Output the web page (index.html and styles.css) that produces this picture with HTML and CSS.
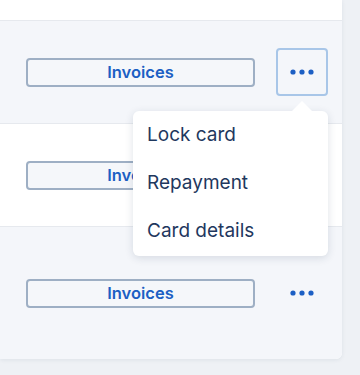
FILE: index.html
```html
<!DOCTYPE html>
<html>
<head>
<meta charset="utf-8">
<link rel="stylesheet" href="styles.css">
</head>
<body>
<div class="card">
  <div class="row row-top"></div>
  <div class="row row-alt">
    <div class="actions">
      <button class="invoices">Invoices</button>
      <div class="more-wrap">
        <button class="more active" aria-label="More">
          <svg width="24" height="6" viewBox="0 0 24 6"><circle cx="3" cy="3" r="2.6"/><circle cx="12" cy="3" r="2.6"/><circle cx="21" cy="3" r="2.6"/></svg>
        </button>
        <div class="menu">
          <div class="caret"></div>
          <div class="item">Lock card</div>
          <div class="item">Repayment</div>
          <div class="item">Card details</div>
        </div>
      </div>
    </div>
  </div>
  <div class="row">
    <div class="actions">
      <button class="invoices">Invoices</button>
      <div class="more-wrap">
        <button class="more" aria-label="More">
          <svg width="24" height="6" viewBox="0 0 24 6"><circle cx="3" cy="3" r="2.6"/><circle cx="12" cy="3" r="2.6"/><circle cx="21" cy="3" r="2.6"/></svg>
        </button>
      </div>
    </div>
  </div>
  <div class="row row-alt row-last">
    <div class="actions">
      <button class="invoices">Invoices</button>
      <div class="more-wrap">
        <button class="more" aria-label="More">
          <svg width="24" height="6" viewBox="0 0 24 6"><circle cx="3" cy="3" r="2.6"/><circle cx="12" cy="3" r="2.6"/><circle cx="21" cy="3" r="2.6"/></svg>
        </button>
      </div>
    </div>
  </div>
</div>
</body>
</html>
```
FILE: styles.css
```css
html, body {
  margin: 0;
  padding: 0;
}
body {
  background: #eef1f5;
  width: 360px;
  height: 375px;
  overflow: hidden;
  font-family: Inter, "Noto Sans", sans-serif;
}
.card {
  width: 342px;
  background: #ffffff;
  border-radius: 0 0 6px 0;
  box-shadow: 0 1px 4px rgba(30, 50, 80, 0.08);
}
.row {
  border-bottom: 1px solid #e6e9ee;
  display: flex;
  align-items: center;
  box-sizing: border-box;
  height: 103px;
}
.row-top {
  height: 21px;
}
.row-alt {
  background: #f4f6fa;
}
.row-last {
  height: 132px;
  border-bottom: none;
  border-radius: 0 0 6px 0;
}
.actions {
  display: flex;
  align-items: center;
  padding-left: 26px;
  gap: 21px;
}
.invoices {
  width: 229px;
  height: 29px;
  box-sizing: border-box;
  border: 2px solid #9eafc4;
  border-radius: 4px;
  background: #f5f7fa;
  color: #1c5fc4;
  font-family: Inter, "Noto Sans", sans-serif;
  font-weight: 600;
  font-size: 16.5px;
  padding: 0;
  cursor: pointer;
}
.more-wrap {
  position: relative;
}
.more {
  width: 52px;
  height: 48px;
  box-sizing: border-box;
  border: 2px solid transparent;
  border-radius: 4px;
  background: transparent;
  display: flex;
  align-items: center;
  justify-content: center;
  padding: 0;
  fill: #1c5fc4;
}
.more.active {
  border-color: #a8c6e8;
}
.menu {
  position: absolute;
  right: 0;
  top: 63px;
  width: 195px;
  background: #ffffff;
  border-radius: 6px;
  box-shadow: 0 2px 8px rgba(30, 50, 80, 0.14);
  padding: 0 0 1px;
  z-index: 5;
}
.caret {
  position: absolute;
  top: -10px;
  right: 16px;
  width: 0;
  height: 0;
  border-left: 10px solid transparent;
  border-right: 10px solid transparent;
  border-bottom: 10px solid #ffffff;
}
.item {
  height: 48px;
  line-height: 48px;
  padding-left: 14px;
  font-size: 19px;
  color: #1f385e;
}
```
